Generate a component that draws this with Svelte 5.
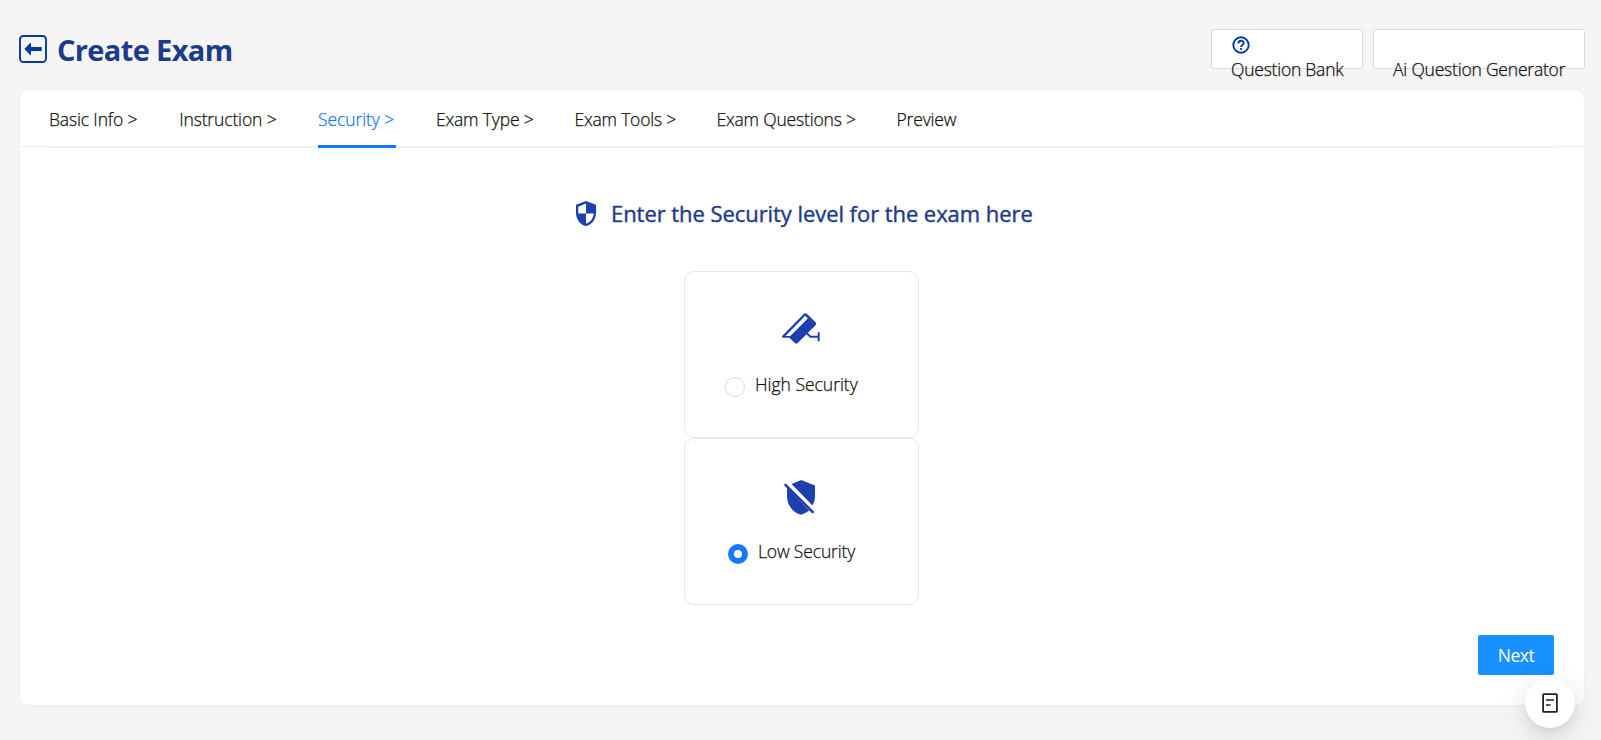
<script lang="ts">
  const tabs = [
    { label: 'Basic Info >', width: 90.2, spacing: -0.14 },
    { label: 'Instruction >', width: 98.8, spacing: -0.14 },
    { label: 'Security >', width: 78, spacing: -0.08 },
    { label: 'Exam Type >', width: 98.5, spacing: -0.17 },
    { label: 'Exam Tools >', width: 102, spacing: -0.2 },
    { label: 'Exam Questions >', width: 140, spacing: -0.18 },
    { label: 'Preview', width: 60, spacing: -0.16 }
  ];
  let active = $state(2);
  let level = $state('low');
</script>

<div class="page">
  <header>
    <div class="title">
      <svg class="back" viewBox="0 0 28 28" aria-hidden="true">
        <rect x="1" y="1" width="26" height="26" rx="3.5" fill="none" stroke="#0039a0" stroke-width="1.9" />
        <path d="M5.3 14 11.2 8.1Q12 7.5 12 8.7V12.1H22.7V16H12V19.4Q12 20.7 11.2 20Z" fill="#0039a0" />
      </svg>
      <h1>Create Exam</h1>
    </div>
    <div class="actions">
      <button class="box bank">
        <svg viewBox="0 0 18 18" aria-hidden="true">
          <circle cx="9" cy="9" r="7.7" fill="none" stroke="#0039a0" stroke-width="1.9" />
          <path d="M6.4 7.4C6.4 3.8 11.7 4.1 11.7 7.1C11.7 8.9 9.1 9 9.1 11" fill="none" stroke="#0039a0" stroke-width="1.9" />
          <rect x="8.1" y="12" width="2" height="1.9" fill="#0039a0" />
        </svg>
        <span>Question Bank</span>
      </button>
      <button class="box ai"><i></i><span>Ai Question Generator</span></button>
    </div>
  </header>

  <main>
    <div class="tabbar">
      <nav>
        {#each tabs as tab, i}
          <button class="tab" class:active={active === i} style:width="{tab.width}px" style:letter-spacing="{tab.spacing}px" onclick={() => (active = i)}>{tab.label}</button>
        {/each}
      </nav>
    </div>
    <h2>
      <svg viewBox="3 1 18 22" preserveAspectRatio="none" aria-hidden="true">
        <path fill="#1e40af" fill-rule="evenodd" d="M12 1 20.4 4Q21 4.2 21 5V11.5C21 17 17.2 21.9 12 23C6.8 21.9 3 17 3 11.5V5Q3 4.2 3.6 4ZM12 12H19C18.6 16.2 15.8 19.9 12 21ZM12 12H5V6.1L12 3.3Z" />
      </svg>
      <span>Enter the Security level for the exam here</span>
    </h2>
    <div class="options">
      <label class="option">
        <svg class="camera" viewBox="0 0 38 31" aria-hidden="true">
          <path fill="#1e40af" d="M22.2.6Q23.5-.4 24.8.8L33.3 9Q34.8 10.7 33.3 12.4L15.7 30Q14.3 31.2 12.9 30L7.4 24.8H1Q-.8 24.4.6 22.4ZM23.2 2.7 3.5 22.9H8.2L25.8 5.4Z" />
          <path fill="none" stroke="#1e40af" stroke-width="2" d="M25 20.5 28.5 23.7H36.2M36.7 19.2V28.3" />
        </svg>
        <span class="choice">
          <input type="radio" name="security" value="high" bind:group={level} />
          <span class="high">High Security</span>
        </span>
      </label>
      <label class="option">
        <svg class="shield" viewBox="0 0 32 35" aria-hidden="true">
          <path fill="#1e40af" d="M7.5 4 16.8.2Q17.3 0 17.8.2L31 5.6V16.5Q31 21.6 28.5 25.4ZM3 7.3 25.2 30.6Q21.7 33.5 17.1 34.8C8.6 32.7 3 24.8 3 16.5Z" />
          <path fill="none" stroke="#1e40af" stroke-width="2.5" stroke-linecap="round" d="M1.5 4.8 28.7 32" />
        </svg>
        <span class="choice">
          <input type="radio" name="security" value="low" bind:group={level} />
          <span class="low">Low Security</span>
        </span>
      </label>
    </div>
    <div class="footer"><button class="next">Next</button></div>
  </main>

  <button class="fab" aria-label="Notes">
    <svg viewBox="0 0 16 20" fill="none" stroke="#222" aria-hidden="true">
      <rect x="1.1" y="1.1" width="13.8" height="17.8" rx="1" stroke-width="1.8" />
      <path d="M4 7H12M4 12H8.6" stroke-width="1.7" />
    </svg>
  </button>
</div>

<style>
  :global(body) { margin: 0; background: #f5f5f5; overflow: hidden; }
  .page { box-sizing: border-box; width: 1601px; height: 740px; padding: 29px 16px 0 19px; font-family: "Open Sans", "Noto Sans", sans-serif; font-size: 17.5px; font-weight: 300; color: #111; -webkit-text-stroke: 0.25px currentColor; }
  .page *, .page *::before { box-sizing: border-box; }
  button { font: inherit; color: inherit; border: 0; padding: 0; margin: 0; background: none; text-align: left; white-space: nowrap; }
  header { display: flex; justify-content: space-between; height: 60px; }
  .title { display: flex; align-items: flex-start; padding-top: 6px; }
  .back { width: 28px; height: 28px; }
  h1 { margin: -5px 0 0 10px; font-size: 29px; line-height: 40px; font-weight: 700; color: #1e3a8a; letter-spacing: -0.64px; white-space: nowrap; -webkit-text-stroke: 0; }
  .actions { display: flex; gap: 10px; }
  .box { display: flex; flex-direction: column; height: 40px; padding: 6px 19px 0; background: #fff; border: 1px solid #d9d9d9; border-radius: 3px; line-height: 26px; }
  .bank { width: 152px; letter-spacing: -0.23px; }
  .ai { width: 212px; letter-spacing: -0.21px; }
  .box svg { width: 18px; height: 18px; flex: none; margin: 0 0 2px 1px; }
  .box i { height: 20px; flex: none; }
  main { display: flex; flex-direction: column; width: 1566px; height: 617px; background: #fff; border: 1px solid #f0f0f0; border-radius: 10px; }
  .tabbar { height: 57px; padding: 0 30px 0 29px; border-bottom: 1px solid #f0f0f0; }
  nav { display: flex; gap: 40px; height: 58px; border-bottom: 1px solid #f0f0f0; }
  .tab { position: relative; height: 58px; line-height: 26px; padding-bottom: 1px; }
  .tab.active { color: #1677ff; }
  .tab.active::before { content: ""; position: absolute; left: 0; right: 0; bottom: 0; height: 3px; background: #1677ff; }
  h2 { display: flex; align-items: flex-start; margin: 54px 0 0 556px; height: 35px; font-size: 22px; line-height: 24px; font-weight: 500; color: #1e3a8a; white-space: nowrap; letter-spacing: -0.06px; -webkit-text-stroke: 0.4px currentColor; }
  h2 svg { width: 20px; height: 25px; margin-right: 15px; }
  .options { display: flex; flex-direction: column; align-items: center; margin-top: 35px; padding-right: 1px; }
  .option { display: flex; flex-direction: column; align-items: center; width: 235px; height: 167px; border: 1px solid #e5e7eb; border-radius: 10px; padding: 41px 0 0; }
  .camera { width: 38px; height: 31px; margin-right: 2px; }
  .shield { width: 32px; height: 35px; margin-right: 3px; }
  .choice { display: flex; height: 26px; line-height: 24px; gap: 10px; margin: 28px 20px 0 0; white-space: nowrap; }
  .shield + .choice { margin-top: 24px; }
  input { appearance: none; width: 20px; height: 20px; margin: 5px 0 0; border: 1px solid #d9d9d9; border-radius: 50%; background: #fff; }
  input:checked { border: 6px solid #1677ff; }
  .high { width: 103px; letter-spacing: -0.02px; }
  .low { width: 97px; letter-spacing: -0.14px; }
  .footer { display: flex; justify-content: flex-end; padding: 30px 30px 0; }
  .next { width: 76px; height: 40px; border-radius: 2px; background: #1890ff; color: #fff; text-align: center; font-weight: 400; letter-spacing: -0.45px; -webkit-text-stroke: 0; }
  .fab { position: absolute; left: 1525px; top: 678px; width: 50px; height: 50px; border-radius: 50%; background: #fff; display: flex; align-items: center; justify-content: center; box-shadow: 0 6px 16px rgba(0,0,0,.08), 0 3px 6px -4px rgba(0,0,0,.12), 0 9px 28px 8px rgba(0,0,0,.05); }
  .fab svg { width: 16px; height: 20px; }
</style>
